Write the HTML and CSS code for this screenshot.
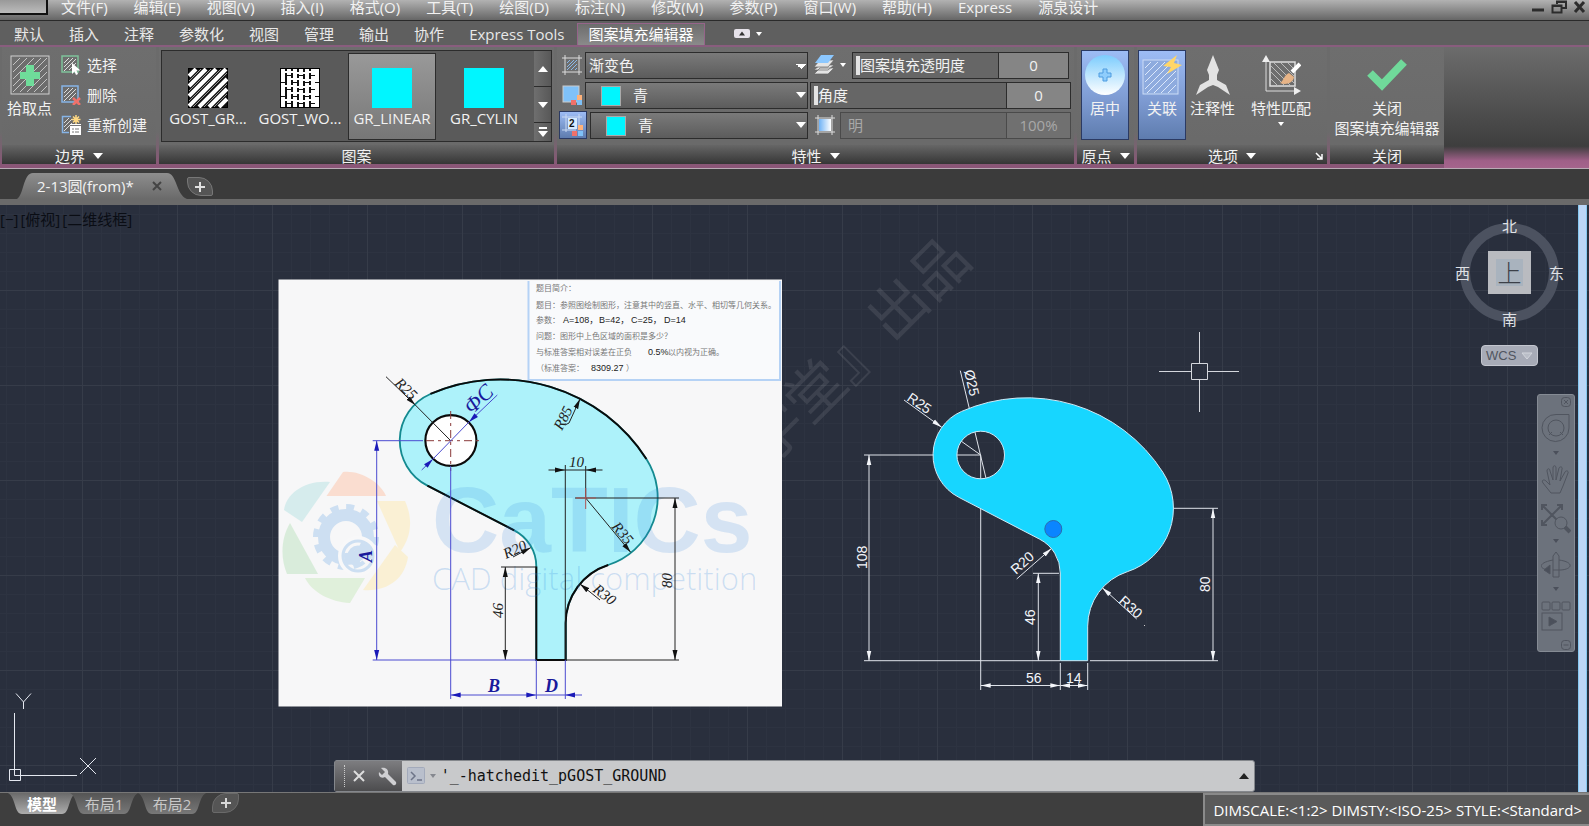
FILE: index.html
```html
<!DOCTYPE html>
<html lang="zh-CN">
<head>
  <meta charset="UTF-8">
  <meta name="viewport" content="width=device-width, initial-scale=1.0">
  <title>2-13圆(from)</title>
  <link rel="stylesheet" href="styles.css">
</head>
<body>

  <!-- 菜单栏 -->
  <header class="menubar">
    <div class="app-corner"></div>
    <nav class="menus">
      <a href="#">文件(F)</a>
      <a href="#">编辑(E)</a>
      <a href="#">视图(V)</a>
      <a href="#">插入(I)</a>
      <a href="#">格式(O)</a>
      <a href="#">工具(T)</a>
      <a href="#">绘图(D)</a>
      <a href="#">标注(N)</a>
      <a href="#">修改(M)</a>
      <a href="#">参数(P)</a>
      <a href="#">窗口(W)</a>
      <a href="#">帮助(H)</a>
      <a href="#">Express</a>
      <a href="#">源泉设计</a>
    </nav>
    <div class="window-buttons">
      <button type="button" aria-label="最小化"><svg width="14" height="14"><path d="M1 10h12" stroke="#2c2c2c" stroke-width="3"/></svg></button>
      <button type="button" aria-label="还原"><svg width="16" height="14"><path d="M6 4V1.500h9V8h-4M1.500 5.500h9v7h-9zM6 2h9M1.500 6h9" fill="none" stroke="#2c2c2c" stroke-width="2"/></svg></button>
      <button type="button" aria-label="关闭"><svg width="14" height="14"><path d="M2 2l9 10M11 2l-9 10" stroke="#2c2c2c" stroke-width="3"/></svg></button>
    </div>
  </header>

  <!-- 功能区选项卡 -->
  <nav class="ribbon-tabs">
    <a href="#">默认</a>
    <a href="#">插入</a>
    <a href="#">注释</a>
    <a href="#">参数化</a>
    <a href="#">视图</a>
    <a href="#">管理</a>
    <a href="#">输出</a>
    <a href="#">协作</a>
    <a href="#">Express Tools</a>
    <a href="#" class="active">图案填充编辑器</a>
    <button type="button" class="ribbon-toggle" aria-label="最小化功能区">
      <svg width="30" height="12"><rect x="1" y="1" width="16" height="9" rx="2" fill="#e6e2ea"/><path d="M6 7.500h6l-3-4z" fill="#333"/><path d="M23 4h6l-3 4z" fill="#fff"/></svg>
    </button>
  </nav>

  <!-- 功能区 -->
  <div class="ribbon">
    <section class="panel panel-border">
      <div class="panel-body">
        <button type="button" class="tool-big">
          <svg width="40" height="40" viewBox="0 0 40 40">
            <rect x="1" y="1" width="38" height="38" fill="none" stroke="#d0d0d0"/>
            <path d="M3 10l7-7M3 17L17 3M3 24L24 3M3 31L31 3M3 37L37 3M10 37l27-27M17 37l20-20M24 37l13-13M31 37l6-6" stroke="#c4c4c4"/>
            <path d="M16 10h8v7h6v7h-6v7h-8v-7h-6v-7h6z" fill="#6fdc9a"/>
          </svg>
          <span>拾取点</span>
        </button>
        <div class="tool-list">
          <button type="button">
            <svg width="20" height="20" viewBox="0 0 20 20"><rect x="1" y="1" width="16" height="16" fill="none" stroke="#7fc29b" stroke-width="1.500"/><path d="M3 8l5-5M3 12l9-9M3 16L15 4M8 15l7-7" stroke="#ddd"/><path d="M11 8v11l2.500-2.500L15 20l2-1-1.500-3.500h4z" fill="#fff"/></svg>
            选择
          </button>
          <button type="button">
            <svg width="20" height="20" viewBox="0 0 20 20"><rect x="1" y="1" width="16" height="16" fill="none" stroke="#86b4e6" stroke-width="1.500"/><path d="M3 8l5-5M3 12l9-9M3 16L15 4M8 15l7-7" stroke="#ddd"/><path d="M12 13l7 7M19 13l-7 7" stroke="#f0716a" stroke-width="2.500"/></svg>
            删除
          </button>
          <button type="button">
            <svg width="20" height="20" viewBox="0 0 20 20"><path d="M10 1.500H1.500v16H8" fill="none" stroke="#86b4e6" stroke-width="1.500"/><path d="M3 8l5-5M3 12l8-8M3 16l8-8" stroke="#ddd"/><path d="M15 0v9M10.500 4.500h9M12 1.500l6 6M18 1.500l-6 6" stroke="#ffd983" stroke-width="1.500"/><rect x="9" y="9" width="11" height="11" fill="#fff"/><path d="M9 10.500h11M11 14h2M14 14h4M11 17h2M14 17h4" stroke="#777"/></svg>
            重新创建
          </button>
        </div>
      </div>
      <h2 class="panel-title">边界 <i class="caret"></i></h2>
    </section>

    <section class="panel panel-pattern">
      <div class="panel-body">
        <div class="gallery">
          <button type="button" class="pattern">
            <svg width="40" height="40" viewBox="0 0 40 40"><rect x="0.500" y="0.500" width="39" height="39" fill="#111" stroke="#000"/><path d="M1 8l7-7M1 18L18 1M1 28L28 1M1 38L38 1M11 39l28-28M21 39l18-18M31 39l8-8" stroke="#fff" stroke-width="4"/><path d="M1 13L13 1M1 23L23 1M1 33L33 1M5 39L39 5M16 39l23-23M26 39l13-13" stroke="#999"/></svg>
            <span>GOST_GR...</span>
          </button>
          <button type="button" class="pattern">
            <svg width="40" height="40" viewBox="0 0 40 40"><rect x="0.500" y="0.500" width="39" height="39" fill="#111" stroke="#000"/><path d="M3 1v38M15 1v38M27 1v38M37 1v38" stroke="#fff" stroke-width="4" stroke-dasharray="13 1"/><path d="M9 1v38M21 1v38M33 1v38" stroke="#fff" stroke-width="4" stroke-dasharray="6 1 13 1 13 1"/><path d="M4 4h10M4 18h10M4 32h10M10 11h10M10 25h10M16 5h10M16 19h10M16 33h10M22 12h10M22 26h10M28 4h9M28 18h9M28 32h9" stroke="#fff" stroke-width="2"/></svg>
            <span>GOST_WO...</span>
          </button>
          <button type="button" class="pattern selected">
            <i class="swatch-large"></i>
            <span>GR_LINEAR</span>
          </button>
          <button type="button" class="pattern">
            <i class="swatch-large"></i>
            <span>GR_CYLIN</span>
          </button>
          <div class="gallery-scroll">
            <button type="button" aria-label="向上"><i class="caret up"></i></button>
            <button type="button" aria-label="向下"><i class="caret"></i></button>
            <button type="button" class="more" aria-label="展开"><i class="dash"></i><i class="caret"></i></button>
          </div>
        </div>
      </div>
      <h2 class="panel-title">图案</h2>
    </section>

    <section class="panel panel-props">
      <div class="panel-body">
        <div class="prop-row">
          <svg class="prop-icon" width="20" height="20" viewBox="0 0 20 20"><path d="M3 0v20M17 0v20M0 3h20M0 17h20" stroke="#ddd"/><path d="M5 8l3-3M5 12l7-7M5 15L15 5M9 15l6-6M13 15l2-2" stroke="#8ab9e8"/></svg>
          <select class="combo" aria-label="图案填充类型"><option>渐变色</option></select>
          <button type="button" class="layer-button" aria-label="图层"><svg width="32" height="20" viewBox="0 0 32 20"><path d="M6 13h14l-6 6H0zM6 10h14l-6 5H0z" fill="#e4e4e4" stroke="#666" stroke-width=".7"/><path d="M6 5h14l-6 7H0z" fill="#e4e4e4" stroke="#666" stroke-width=".7"/><path d="M7 0h13l-6 8H1z" fill="#8cc8ff"/><path d="M26 8h6l-3 4z" fill="#fff"/></svg></button>
          <div class="slider"><label for="opacity">图案填充透明度</label><input id="opacity" type="text" value="0"></div>
        </div>
        <div class="prop-row">
          <svg class="prop-icon" width="20" height="20" viewBox="0 0 20 20"><rect x="1" y="1" width="16" height="16" fill="#7fc1f8" stroke="#ccc"/><rect x="15" y="10" width="5" height="5" fill="#ffb27a"/><rect x="9" y="15" width="5" height="5" fill="#f0716a"/><rect x="15" y="15" width="5" height="5" fill="#7fc1f8"/></svg>
          <span class="color-combo"><i class="swatch"></i><select class="combo" aria-label="渐变色 1"><option>青</option></select></span>
          <div class="slider slider-wide"><label for="angle">角度</label><input id="angle" type="text" value="0"></div>
        </div>
        <div class="prop-row">
          <button type="button" class="pressed-icon" aria-label="渐变色 2"><svg width="22" height="22" viewBox="0 0 22 22"><path d="M4 0v18M17 0v14M0 3h20M0 16h14" stroke="#c9d9f2"/><rect x="6" y="4" width="9" height="11" fill="#d6ebff"/><text x="7" y="13" class="two">2</text><rect x="16" y="11" width="5" height="5" fill="#ffb27a"/><rect x="10" y="17" width="5" height="5" fill="#f0716a"/><rect x="16" y="17" width="5" height="5" fill="#7fc1f8"/></svg></button>
          <span class="color-combo"><i class="swatch"></i><select class="combo" aria-label="渐变色 2 颜色"><option>青</option></select></span>
          <svg class="tint-icon" width="20" height="20" viewBox="0 0 20 20"><defs><linearGradient id="tint"><stop stop-color="#6fb2f5"/><stop offset="1" stop-color="#fff"/></linearGradient></defs><path d="M3 0v20M17 0v20M0 3h20M0 17h20" stroke="#ddd"/><rect x="4" y="4" width="12" height="12" fill="url(#tint)"/></svg>
          <div class="slider slider-off"><label for="tintValue">明</label><input id="tintValue" type="text" value="100%" disabled></div>
        </div>
      </div>
      <h2 class="panel-title">特性 <i class="caret"></i></h2>
    </section>

    <section class="panel panel-origin">
      <div class="panel-body">
        <button type="button" class="tool-big pressed">
          <svg width="40" height="40" viewBox="0 0 40 40"><defs><linearGradient id="ball" x2="0" y2="1"><stop stop-color="#7cccfd"/><stop offset="1" stop-color="#fff"/></linearGradient></defs><circle cx="20" cy="20" r="20" fill="url(#ball)"/><path d="M18 14h4v4h4v4h-4v4h-4v-4h-4v-4h4z" fill="#8fcdfc" stroke="#4d9be0"/></svg>
          <span>居中</span>
        </button>
      </div>
      <h2 class="panel-title">原点 <i class="caret"></i></h2>
    </section>

    <section class="panel panel-options">
      <div class="panel-body">
        <button type="button" class="tool-big pressed">
          <svg width="40" height="40" viewBox="0 0 40 40"><rect x="1" y="5" width="35" height="34" fill="#8eabde" stroke="#cbdcf6"/><path d="M3 13l6-6M3 20L16 7M3 27L23 7M3 34L30 7M5 38l29-29M12 38l22-22M19 38l15-15M26 38l8-8" stroke="#dce8fb"/><path d="M35 0L21 11l8 1-4 7 15-9-8-2z" fill="#ffd668"/></svg>
          <span>关联</span>
        </button>
        <button type="button" class="tool-big tool-annotative">
          <svg width="40" height="40" viewBox="0 0 40 40"><path d="M20 0l6 15-2 5v5l9 5 4 10-12-8-5-2-5 2-12 8 4-10 9-5v-5l-2-5z" fill="#e2e2e2"/></svg>
          <span>注释性</span>
        </button>
        <button type="button" class="tool-big tool-match">
          <svg width="40" height="40" viewBox="0 0 40 40"><path d="M5 5v31h31" fill="none" stroke="#ddd"/><path d="M1 7l4-7 4 7zM33 32l7 4-7 4z" fill="#eee"/><rect x="9" y="7" width="25" height="24" fill="none" stroke="#ddd" stroke-width="1.500"/><path d="M10 24l7 7M10 17l14 14M10 11l19 19M13 8l20 20M20 8l13 13M27 8l6 6" stroke="#bbb"/><path d="M19 28c3-1 4-8 9-10l5 4c-1 7-9 8-14 6z" fill="#e7b487"/><path d="M31 17l8-8" stroke="#fff" stroke-width="4"/></svg>
          <span>特性匹配</span>
          <i class="caret small"></i>
        </button>
      </div>
      <h2 class="panel-title">选项 <i class="caret"></i>
        <svg class="launcher" width="8" height="8"><path d="M1 1l6 6M7 2v5H2" fill="none" stroke="#fff" stroke-width="1.500"/></svg>
      </h2>
    </section>

    <section class="panel panel-close">
      <div class="panel-body">
        <button type="button" class="tool-big">
          <svg width="40" height="40" viewBox="0 0 40 40"><path d="M3 18l12 12L37 7" fill="none" stroke="#70d99a" stroke-width="8"/></svg>
          <span>关闭<br>图案填充编辑器</span>
        </button>
      </div>
      <h2 class="panel-title">关闭</h2>
    </section>
    <div class="ribbon-rest"></div>
  </div>

  <!-- 文件选项卡 -->
  <div class="file-tabs">
    <div class="file-tab">
      <a href="#">2-13圆(from)*</a>
      <button type="button" aria-label="关闭图形"><svg width="12" height="12"><path d="M2 2l8 8M10 2l-8 8" stroke="#444" stroke-width="2"/></svg></button>
    </div>
    <button type="button" class="file-add" aria-label="新图形"><svg width="12" height="12"><path d="M6 1v10M1 6h10" stroke="#e0e0e0" stroke-width="2"/></svg></button>
  </div>

  <!-- 绘图区 -->
  <main class="canvas">
    <svg class="drawing" width="100%" height="100%">
      <defs>
        <marker id="arrow" viewBox="0 0 10 6" refX="10" refY="3" markerWidth="10" markerHeight="6" markerUnits="userSpaceOnUse" orient="auto-start-reverse"><path d="M0 .7l10 2.300-10 2.300z" fill="#f4f6fa"/></marker>
        <marker id="arrowBlack" viewBox="0 0 10 6" refX="10" refY="3" markerWidth="10" markerHeight="6" markerUnits="userSpaceOnUse" orient="auto-start-reverse"><path d="M0 .5l10 2.500-10 2.500z" fill="#111"/></marker>
        <marker id="arrowBlue" viewBox="0 0 10 6" refX="10" refY="3" markerWidth="10" markerHeight="6" markerUnits="userSpaceOnUse" orient="auto-start-reverse"><path d="M0 .5l10 2.500-10 2.500z" fill="#1a1ab8"/></marker>
      </defs>

      <g transform="translate(0 -205)">
        <!-- 题目图片 -->
        <rect x="278.500" y="279.500" width="503.500" height="427" fill="#f7f7f8"/>
        <path d="M528.500 281V380H780V281" fill="#f9fafc" stroke="#b5d2f5" stroke-width="2"/>
        <g class="brief">
          <text x="536" y="291">题目简介：</text>
          <text x="536" y="308">题目：参照图绘制图形，注意其中的竖直、水平、相切等几何关系。</text>
          <text x="536" y="323">参数：</text>
          <text x="536" y="339">问题：图形中上色区域的面积是多少？</text>
          <text x="536" y="355">与标准答案相对误差在正负</text>
          <text x="668" y="355">以内视为正确。</text>
          <text x="536" y="371">（标准答案：</text>
          <text x="626" y="371">）</text>
          <g class="brief-num">
            <text x="563" y="323">A=108，</text>
            <text x="599" y="323">B=42，</text>
            <text x="631" y="323">C=25，</text>
            <text x="664" y="323">D=14</text>
            <text x="648" y="355">0.5%</text>
            <text x="591" y="371">8309.27</text>
          </g>
        </g>

        <g transform="matrix(1.073 0 0 1.067 -601.4 -45)">
          <path d="M1060.300 660.700V573A38.100 38.100 0 0 0 1039.700 539.200L958.800 497.300A47.600 47.600 0 0 1 961.600 411.400A161.900 161.900 0 0 1 1162.900 472.300A66.700 66.700 0 0 1 1127.300 571.700A57.150 57.150 0 0 0 1087.700 626.100V660.700Z" fill="#adf2fa" stroke="#148a90" stroke-width="1.700"/>
          <path d="M961.600 411.400A161.900 161.900 0 0 1 1162.900 472.300M1127.300 571.700A57.150 57.150 0 0 0 1087.700 626.100V660.700H1060.300V573M1039.700 539.200L958.800 497.300" fill="none" stroke="#0b0b0b" stroke-width="1.800"/>
          <circle cx="980.700" cy="455" r="23.800" fill="#fff" stroke="#0b0b0b" stroke-width="2"/>
        </g>

        <!-- CaTICs 标志 -->
        <g opacity=".4">
          <path d="M284 510C286 494 304 480 330 482L302 522Z" fill="#a5dede"/>
          <path d="M326.500 496L343 472C360 470 380 482 386 496Z" fill="#ffb896"/>
          <path d="M377 501H405C412 516 413 535 400 552Z" fill="#ffe8a0"/>
          <path d="M395 545L408 557C405 578 388 592 363 590Z" fill="#ffe8a0"/>
          <path d="M305 578H365L350 603C330 602 312 592 305 578Z" fill="#bfe6b0"/>
          <path d="M290 523L318 574H287C281 560 280 540 290 523Z" fill="#aedeb0"/>
        </g>
        <g opacity=".22" fill="none" stroke="#3c8ede">
          <circle cx="346" cy="537" r="22" stroke-width="12"/>
          <circle cx="346" cy="537" r="30" stroke-width="6" stroke-dasharray="8 7.700"/>
          <circle cx="358" cy="556" r="17" stroke="#fff" stroke-width="6"/>
          <circle cx="358" cy="556" r="15" stroke-width="3"/>
          <path d="M364 550a8.500 8.500 0 1 0 0 12" stroke-width="4"/>
        </g>
        <text x="432" y="552" class="logo-text">CaTICs</text>
        <text x="432" y="590" class="logo-sub">CAD digital competition</text>

        <g class="sheet-black">
          <path d="M386 376.700L415.300 405" marker-end="url(#arrowBlack)"/>
          <path d="M415.300 405L450.700 440.700"/>
          <path d="M565 425L569 423L580 399" marker-end="url(#arrowBlack)"/>
          <path d="M548.500 470H565" marker-end="url(#arrowBlack)"/>
          <path d="M602.500 470H586" marker-end="url(#arrowBlack)"/>
          <path d="M565 470H586M565.300 465V660M585.700 466V498M575 498H679M565 660H679M501 567H536"/>
          <path d="M505.300 567V660" marker-start="url(#arrowBlack)" marker-end="url(#arrowBlack)"/>
          <path d="M675 498V660" marker-start="url(#arrowBlack)" marker-end="url(#arrowBlack)"/>
          <path d="M585.700 498L630.700 552.300" marker-end="url(#arrowBlack)"/>
          <path d="M513 557L530.700 547.700" marker-end="url(#arrowBlack)"/>
          <path d="M600 600L580 584" marker-end="url(#arrowBlack)"/>
        </g>
        <path d="M426 440.700H482M450.700 411V471" stroke="#8a3b3b" stroke-dasharray="8 4 3 4"/>
        <path d="M576 498H596M585.700 488V509" stroke="#b05050"/>
        <g class="sheet-blue">
          <path d="M372.700 440.700H423M372.700 660H536M450.700 466V699M536.300 660V699M565.300 660V699"/>
          <path d="M376.700 440.700V660" marker-start="url(#arrowBlue)" marker-end="url(#arrowBlue)"/>
          <path d="M450.700 695H536.300" marker-start="url(#arrowBlue)" marker-end="url(#arrowBlue)"/>
          <path d="M536.300 695H565M582 695H565.300" marker-end="url(#arrowBlue)"/>
          <path d="M497.300 395L469 422" marker-end="url(#arrowBlue)"/>
          <path d="M421.700 470L433 459" marker-end="url(#arrowBlue)"/>
          <path d="M433 459L469 422"/>
        </g>
        <g class="sheet-text">
          <text transform="translate(394 384) rotate(44)">R25</text>
          <text transform="translate(562 431) rotate(-63)">R85</text>
          <text x="569" y="467">10</text>
          <text transform="translate(611 527) rotate(50)">R35</text>
          <text transform="translate(506 559) rotate(-25)">R20</text>
          <text transform="translate(592 591) rotate(38)">R30</text>
          <text transform="translate(503 618) rotate(-90)">46</text>
          <text transform="translate(672 588) rotate(-90)">80</text>
        </g>
        <g class="sheet-letter">
          <text transform="translate(472 415) rotate(-43)" class="light">ΦC</text>
          <text transform="translate(372 562) rotate(-90)">A</text>
          <text x="488" y="692">B</text>
          <text x="545" y="692">D</text>
        </g>

        <text class="watermark" transform="translate(728 508) rotate(-45)">设学堂』出品</text>

        <!-- 模型图形 -->
        <g class="dims">
          <path d="M864 455H980.700M980.700 455V690M864 660.700H1060M1090 660.700H1218M1033 573.300H1059M1173 508.300H1218M1060.300 663V690M1087.700 663V690M960.300 370.700L986 478.300"/>
          <path d="M980.700 455L941.700 427.300"/>
          <path d="M904 400L941.700 427.300" marker-end="url(#arrow)"/>
          <path d="M869 455V660.700" marker-start="url(#arrow)" marker-end="url(#arrow)"/>
          <path d="M1038.300 573.300V660.700" marker-start="url(#arrow)" marker-end="url(#arrow)"/>
          <path d="M1213 508.300V660.700" marker-start="url(#arrow)" marker-end="url(#arrow)"/>
          <path d="M980.700 685.500H1060.300" marker-start="url(#arrow)" marker-end="url(#arrow)"/>
          <path d="M1060.300 685.500H1087.700" marker-start="url(#arrow)" marker-end="url(#arrow)"/>
          <path d="M1016.700 579L1051.700 548.300" marker-end="url(#arrow)"/>
          <path d="M1136.700 619L1102.300 587.700" marker-end="url(#arrow)"/>
        </g>
        <path d="M1060.300 660.700V573A38.100 38.100 0 0 0 1039.700 539.200L958.800 497.300A47.600 47.600 0 0 1 961.600 411.400A161.900 161.900 0 0 1 1162.900 472.300A66.700 66.700 0 0 1 1127.300 571.700A57.150 57.150 0 0 0 1087.700 626.100V660.700ZM956.900 455a23.800 23.800 0 1 0 47.600 0a23.800 23.800 0 1 0 -47.600 0" fill="#17d6ff" fill-rule="evenodd" stroke="#cfe9f5"/>
        <g class="dim-text">
          <text transform="translate(906 400) rotate(34)">R25</text>
          <text transform="translate(964 371) rotate(77)">Ø25</text>
          <text transform="translate(1016 575) rotate(-42)">R20</text>
          <text transform="translate(1118 602) rotate(42)">R30</text>
          <text transform="translate(867 569) rotate(-90)">108</text>
          <text transform="translate(1035 625) rotate(-90)">46</text>
          <text transform="translate(1210 592) rotate(-90)">80</text>
          <text x="1026" y="683">56</text>
          <text x="1066" y="683">14</text>
        </g>
        <circle cx="1053.300" cy="529" r="8.500" fill="#0a85ff" stroke="#2a6cb0"/>
        <rect x="1144" y="625" width="1" height="1" fill="#ccc"/>

        <!-- 十字光标 -->
        <path d="M1159 371.500H1191.500M1207.500 371.500H1239M1199.500 332V363.500M1199.500 379.500V412M1191.500 363.500h16v16h-16z" fill="none" stroke="#d4d7dd"/>

        <!-- UCS 图标 -->
        <path d="M14.500 713V775.500H77M9.500 769.500h11v11h-11zM16 693.500L23.500 702L31 693.500M23.500 702V709M80 758L96 774M96 758L80 774" fill="none" stroke="#e4e8f0"/>
      </g>
    </svg>

    <div class="view-controls">
      <button type="button">[−]</button><button type="button">[俯视]</button><button type="button">[二维线框]</button>
    </div>

    <div class="viewcube">
      <button type="button">北</button>
      <div class="viewcube-row">
        <button type="button">西</button>
        <button type="button" class="face"><span>上</span></button>
        <button type="button">东</button>
      </div>
      <button type="button">南</button>
    </div>
    <button type="button" class="wcs">WCS <svg width="12" height="8"><path d="M1 1h10l-5 6z" fill="#b9bdc7" stroke="#d2d5dc"/></svg></button>

    <div class="navbar">
      <button type="button" class="nav-end" aria-label="关闭导航栏"><svg width="10" height="10"><rect x=".5" y=".5" width="9" height="9" rx="3"/><path d="M3 3l4 4M7 3L3 7"/></svg></button>
      <button type="button" class="nav-wheel" aria-label="控制盘"><svg width="30" height="30"><path d="M15 1.500H28V15A13.500 13.500 0 1 1 15 1.500z"/><circle cx="15" cy="15" r="8"/><path d="M8 22l3-3M22 22l-3-3"/></svg></button>
      <button type="button" class="nav-caret" aria-label="控制盘选项"><i class="caret dim"></i></button>
      <button type="button" class="nav-hand" aria-label="平移"><svg width="30" height="30"><path d="M10 28L2 18c-2-3 1-4 3-2l4 4L6 6c0-3 3-3 3 0l3 9V3c0-3 3-3 3 0v12l3-12c1-2 4-1 3 1l-2 12 5-9c1-2 4-1 3 1l-5 13-3 7z"/></svg></button>
      <button type="button" class="nav-zoom" aria-label="缩放"><svg width="30" height="30"><path d="M2 2l18 18M20 2L2 20M1 6V1h5M16 1h5v5M1 16v5h5" stroke-width="2"/><circle cx="20" cy="19" r="6" fill="#6c727c"/><path d="M24 23l5 5" stroke-width="4"/></svg></button>
      <button type="button" class="nav-caret" aria-label="缩放选项"><i class="caret dim"></i></button>
      <button type="button" class="nav-orbit" aria-label="动态观察"><svg width="30" height="30"><path d="M12 27V6l3-4 3 4v21zM12 10c-16 3-14 9-4 10M18 10c15 2 14 9 2 10h-8"/><path d="M9 15v9l-6-4z" fill="#4b505b"/></svg></button>
      <button type="button" class="nav-caret" aria-label="动态观察选项"><i class="caret dim"></i></button>
      <button type="button" class="nav-motion" aria-label="ShowMotion"><svg width="30" height="30"><rect x="1" y="1" width="8" height="8" rx="1"/><rect x="11" y="1" width="8" height="8" rx="1"/><rect x="21" y="1" width="8" height="8" rx="1"/><rect x="1" y="12" width="20" height="17"/><path d="M8 16v9l8-4.500z" fill="#4b505b"/></svg></button>
      <button type="button" class="nav-end" aria-label="自定义导航栏"><svg width="10" height="10"><rect x=".5" y=".5" width="9" height="9" rx="3"/><path d="M2.500 5h5"/></svg></button>
    </div>

    <div class="edge-strip"></div>

    <form class="command">
      <div class="command-tools">
        <i class="grip"></i>
        <button type="button" aria-label="关闭命令行"><svg width="14" height="14"><path d="M2 2l10 10M12 2L2 12" stroke="#ddd" stroke-width="2"/></svg></button>
        <button type="button" aria-label="自定义"><svg width="20" height="20" viewBox="0 0 20 20"><path d="M3 2l4 4-3 3-3-3c-1 4 2 7 6 5l8 8c2 1 4-1 3-3l-8-8c1-4-2-7-7-6z" fill="#cfcfd2"/></svg></button>
      </div>
      <svg class="prompt" width="30" height="18"><rect x=".5" y=".5" width="17" height="16" rx="1" fill="#b9bfcc" stroke="#a3aabb"/><path d="M4 5l4 4-4 4M10 13h5" fill="none" stroke="#6d7488" stroke-width="1.500"/><path d="M23 7h6l-3 4z" fill="#85888f"/></svg>
      <input type="text" aria-label="命令行" value="'_-hatchedit_pGOST_GROUND">
      <button type="button" aria-label="命令历史"><svg width="10" height="6"><path d="M0 6h10L5 0z" fill="#222"/></svg></button>
    </form>
  </main>

  <!-- 布局选项卡与状态栏 -->
  <footer class="bottom">
    <nav class="layout-tabs">
      <a href="#" class="current">模型</a>
      <a href="#">布局1</a>
      <a href="#">布局2</a>
      <button type="button" aria-label="新建布局"><svg width="12" height="12"><path d="M6 1v10M1 6h10" stroke="#d8d8d8" stroke-width="2"/></svg></button>
    </nav>
    <div class="status">DIMSCALE:&lt;1:2&gt; DIMSTY:&lt;ISO-25&gt; STYLE:&lt;Standard&gt;</div>
  </footer>

</body>
</html>
```
FILE: styles.css
```css
* {
  box-sizing: border-box;
}

body {
  margin: 0;
  height: 100vh;
  display: flex;
  flex-direction: column;
  overflow: hidden;
  background: #3d3d3d;
  color: #f2f2f2;
  font-family: "Open Sans", "Noto Sans CJK SC", sans-serif;
  font-size: 15px;
  line-height: 20px;
}

a {
  color: inherit;
  text-decoration: none;
}

button {
  margin: 0;
  padding: 0;
  border: 0;
  background: none;
  color: inherit;
  font: inherit;
}

svg {
  display: block;
  flex: none;
}

/* 菜单栏 */
.menubar {
  display: flex;
  height: 21px;
  flex: none;
  background: linear-gradient(#b2b2b2, #8c8c8c 50%, #666);
  border-bottom: 1px solid #2a2a2a;
}

.app-corner {
  width: 48px;
  height: 15px;
  background: linear-gradient(#999, #bbb);
  border: solid #111;
  border-width: 0 2px 2px 0;
}

.menus {
  display: flex;
  gap: 26px;
  margin-left: 13px;
  height: 16px;
  line-height: 14px;
  white-space: nowrap;
}

.window-buttons {
  display: flex;
  gap: 6px;
  margin-left: auto;
  padding-right: 2px;
  height: 14px;
}

/* 功能区选项卡 */
.ribbon-tabs {
  display: flex;
  gap: 1px;
  flex: none;
  height: 24px;
  padding: 2px 2px 0;
  background: #5f5f5f;
  color: #e8e8e8;
  white-space: nowrap;
}

.ribbon-tabs a {
  padding: 0 12px;
  line-height: 22px;
}

.ribbon-tabs .active {
  padding: 0 10px;
  border: 1px solid #96648a;
  border-bottom: 0;
  background: linear-gradient(#6d6d6d, #8a8a8a);
  line-height: 20px;
  color: #fff;
}

.ribbon-toggle {
  margin-left: 27px;
}

/* 功能区 */
.ribbon {
  display: flex;
  gap: 3px;
  flex: none;
  height: 124px;
  padding-left: 2px;
  border-top: 2px solid #895d7e;
  border-bottom: 1px solid #b9abb5;
  background: linear-gradient(#6b6b6b 70%, #8c5578);
}

.panel {
  display: flex;
  flex-direction: column;
  flex: none;
  height: 117px;
  background: linear-gradient(#6e6e6e, #696969);
}

.panel-border { width: 154px; }
.panel-pattern { width: 395px; }
.panel-props { width: 517px; }
.panel-origin { width: 57px; }
.panel-options { width: 190px; }
.panel-close { width: 114px; }

.panel-body {
  display: flex;
  height: 98px;
  padding-top: 3px;
}

.panel-title {
  display: flex;
  position: relative;
  align-items: center;
  justify-content: center;
  gap: 8px;
  margin: 0;
  padding-top: 2px;
  height: 19px;
  background: linear-gradient(#666, #363636);
  font-size: 15px;
  font-weight: normal;
  white-space: nowrap;
}

.ribbon-rest {
  flex: 1;
  margin-left: -3px;
  background: linear-gradient(#6c6c6c, #3e3e3e 82%, #9f6088 94%, #a5648c);
}

.caret {
  width: 0;
  height: 0;
  border: solid transparent;
  border-width: 6px 5px 0;
  border-top-color: #fff;
}

.caret.up {
  border-width: 0 5px 6px;
  border-bottom-color: #fff;
}

.caret.small {
  margin-top: 4px;
  border-width: 4px 3px 0;
}

.caret.dim {
  border-width: 4px 3px 0;
  border-top-color: #4b505b;
}

.launcher {
  position: absolute;
  right: 4px;
  bottom: 4px;
}

.tool-big {
  display: flex;
  flex-direction: column;
  align-items: center;
  height: 90px;
  padding-top: 5px;
  white-space: nowrap;
}

.tool-big span {
  margin-top: 3px;
}

.tool-big.pressed {
  border: 1px solid #2b3a63;
  background: linear-gradient(#9dbcf5, #7b98cf 60%, #5e7cae);
  width: 48px;
  padding-top: 4px;
}

.panel-border .tool-big {
  margin-left: 5px;
}

.panel-origin .tool-big {
  margin-left: 4px;
}

.panel-options .panel-body {
  gap: 4px;
  padding-left: 1px;
}

.tool-match {
  margin-left: 12px;
}

.panel-close .tool-big {
  width: 100%;
}

.tool-list {
  display: flex;
  flex-direction: column;
  margin-left: 9px;
}

.tool-list button {
  display: flex;
  align-items: center;
  gap: 6px;
  height: 30px;
  white-space: nowrap;
}

.gallery {
  display: flex;
  flex: 1;
  margin: 0 2px;
  height: 92px;
  border: 1px solid #2c2c2c;
  background: #5a5a5a;
}

.pattern {
  display: flex;
  flex-direction: column;
  align-items: center;
  width: 92px;
  margin-top: 2px;
  height: 87px;
  padding-top: 14px;
  border: 1px solid transparent;
}

.pattern.selected {
  border-color: #2c2c2c;
  background: linear-gradient(#999, #777);
  width: 88px;
  margin: 2px 2px 0;
}

.swatch-large {
  width: 40px;
  height: 40px;
  background: #00f6ff;
}

.gallery-scroll {
  display: flex;
  flex-direction: column;
  gap: 1px;
  margin-left: auto;
  width: 17px;
  background: #2c2c2c;
}

.gallery-scroll button {
  display: flex;
  flex-direction: column;
  align-items: center;
  justify-content: center;
  flex: 2;
  background: linear-gradient(90deg, #6f6f6f, #585858);
}

.gallery-scroll .more {
  flex: 1;
  gap: 2px;
}

.dash {
  width: 8px;
  height: 2px;
  background: #fff;
}

/* 特性面板 */
.panel-props .panel-body {
  flex-direction: column;
  gap: 4px;
  padding: 5px 3px 0 2px;
}

.prop-row {
  display: flex;
  align-items: center;
  height: 26px;
}

.prop-icon {
  margin: 0 3px;
}

.pressed-icon {
  display: flex;
  align-items: center;
  justify-content: center;
  width: 28px;
  height: 28px;
  border: 1px solid #2b3a63;
  background: linear-gradient(#9dbcf5, #5e7cae);
}

.pressed-icon + .color-combo {
  margin-left: 3px;
  width: 218px;
}

.two {
  fill: #111;
  font: bold 10px "Liberation Sans", sans-serif;
}

.combo {
  appearance: none;
  width: 223px;
  height: 27px;
  padding: 0 3px;
  border: 1px solid #2c2c2c;
  border-radius: 0;
  background: linear-gradient(#7a7a7a, #5c5c5c);
  color: #f2f2f2;
  font: inherit;
}

.prop-row > .combo,
.color-combo {
  position: relative;
  display: flex;
  width: 223px;
  flex: none;
}

.prop-row > .combo {
  background: linear-gradient(45deg, transparent 50%, #fff 50%) 210px 11px / 5px 5px no-repeat,
    linear-gradient(-45deg, transparent 50%, #fff 50%) 215px 11px / 5px 5px no-repeat,
    linear-gradient(#7a7a7a, #5c5c5c);
}

.color-combo .combo {
  width: 100%;
  padding-left: 47px;
}

.color-combo::after {
  content: "";
  position: absolute;
  right: 2px;
  top: 10px;
  border: solid transparent;
  border-width: 6px 5px 0;
  border-top-color: #fff;
}

.swatch {
  position: absolute;
  left: 16px;
  top: 4px;
  width: 20px;
  height: 20px;
  border: 1px solid #aaa;
  background: #00f6ff;
}

.layer-button {
  margin: 0 6px;
}

.slider {
  display: flex;
  flex: 1;
  height: 27px;
  border: 1px solid #2c2c2c;
  background: #666;
}

.prop-row:first-child .slider {
  margin-right: 2px;
}

.slider label {
  flex: 1;
  margin: 3px 0 3px 3px;
  border-left: 4px solid #e4e4e4;
  line-height: 18px;
}

.slider input {
  width: 70px;
  border: 0;
  border-left: 1px solid #2c2c2c;
  background: #858585;
  color: #f2f2f2;
  font: inherit;
  text-align: center;
}

.slider-wide {
  margin-left: 2px;
}

.slider-wide input,
.slider-off input {
  width: 64px;
}

.slider-off {
  border-color: #4a4a4a;
  background: #686868;
  color: #a8a8a8;
}

.slider-off label {
  border-left-color: transparent;
}

.slider-off input {
  border-color: #4a4a4a;
  background: #707070;
  color: #a8a8a8;
}

.tint-icon {
  margin: 0 5px 0 7px;
}

/* 文件选项卡 */
.file-tabs {
  display: flex;
  align-items: flex-end;
  flex: none;
  height: 36px;
  padding-left: 17px;
  border-bottom: 6px solid #6a6a6a;
  background: #3b3b3b;
}

.file-tab {
  display: flex;
  align-items: center;
  width: 170px;
  height: 26px;
  padding: 0 24px 0 20px;
  justify-content: space-between;
  background: linear-gradient(#8e8e8e, #6a6a6a);
  clip-path: path("M0 26C7 22 6 0 16 0H150C160 0 159 22 170 26Z");
  white-space: nowrap;
}

.file-add {
  display: flex;
  align-items: center;
  justify-content: center;
  width: 26px;
  height: 19px;
  margin-bottom: 3px;
  border: 1px solid #777;
  border-radius: 2px 14px 2px 14px;
  background: #555;
}

/* 绘图区 */
.canvas {
  position: relative;
  flex: 1;
  min-height: 0;
  overflow: hidden;
  background-color: #292f3d;
  background-image:
    linear-gradient(90deg, #363c49 1px, transparent 1px),
    linear-gradient(#363c49 1px, transparent 1px),
    linear-gradient(90deg, #2d3341 1px, transparent 1px),
    linear-gradient(#2d3341 1px, transparent 1px);
  background-size: 95px 95px, 95px 95px, 19px 19px, 19px 19px;
  background-position: 82px 0, 0 85px, 6px 0, 0 9px;
}

.drawing {
  position: absolute;
  inset: 0;
}

.brief {
  fill: #777;
  font: 8px "Noto Sans CJK SC", sans-serif;
}

.brief-num {
  fill: #222;
  font: 9px "Liberation Sans", "Noto Sans CJK SC", sans-serif;
}

.logo-text {
  fill: #2d83dc;
  fill-opacity: .17;
  font: bold 93px "Liberation Sans", sans-serif;
}

.logo-sub {
  fill: #2d83dc;
  fill-opacity: .22;
  font: 300 31px "Open Sans", sans-serif;
}

.sheet-black path {
  fill: none;
  stroke: #222;
}

.sheet-blue path {
  fill: none;
  stroke: #4a4ad0;
}

.sheet-text {
  fill: #222;
  font: italic 15px "Liberation Serif", serif;
}

.sheet-letter {
  fill: #1a1a9c;
  font: italic bold 18px "Liberation Serif", serif;
}

.sheet-letter .light {
  font-size: 22px;
  font-weight: normal;
}

.watermark {
  fill: #fff;
  fill-opacity: .09;
  font: 58px "Noto Sans CJK SC", sans-serif;
}

.dims path {
  fill: none;
  stroke: #dfe3ea;
}

.dim-text {
  fill: #f4f6fa;
  font: 14px "Liberation Sans", sans-serif;
}

.view-controls {
  position: absolute;
  left: 0;
  top: 4px;
  display: flex;
  gap: 2px;
  color: #0a0d14;
}

.viewcube {
  position: absolute;
  right: 30px;
  top: 18px;
  width: 99px;
  height: 99px;
  display: flex;
  flex-direction: column;
  align-items: center;
  justify-content: space-between;
  border: 10px solid #4c5260;
  border-radius: 50%;
  color: #e0e2e6;
}

.viewcube > button {
  margin: -17px 0;
}

.viewcube-row {
  display: flex;
  align-items: center;
  gap: 18px;
}

.face {
  width: 43px;
  height: 43px;
  padding: 8px;
  background: #b9bbc0;
  color: #3c4048;
  font-size: 24px;
}

.face span {
  display: block;
  background: #a9b3be;
  font-weight: 300;
  line-height: 27px;
}

.wcs {
  position: absolute;
  right: 51px;
  top: 140px;
  display: flex;
  align-items: center;
  justify-content: space-between;
  width: 57px;
  height: 21px;
  padding: 0 4px;
  border: 1px solid #c3c6cf;
  border-radius: 4px;
  background: #a7abb7;
  color: #50555f;
  font: 13px "Liberation Sans", sans-serif;
}

.navbar {
  position: absolute;
  right: 14px;
  top: 189px;
  display: flex;
  flex-direction: column;
  width: 38px;
  border: 1px solid #858b94;
  border-radius: 3px;
  background: #6c727c;
}

.navbar button {
  display: flex;
  align-items: center;
  justify-content: center;
}

.navbar svg {
  fill: none;
  stroke: #50555f;
}

.navbar .nav-end {
  height: 13px;
  justify-content: flex-end;
  padding-right: 3px;
}

.nav-wheel { height: 40px; }
.nav-caret { height: 10px; }
.nav-hand { height: 44px; }
.nav-zoom { height: 34px; }
.nav-orbit { height: 38px; }
.nav-motion { height: 44px; }

.edge-strip {
  position: absolute;
  top: 0;
  right: 2px;
  bottom: 0;
  width: 9px;
  border: solid #86c8f0;
  border-width: 0 1px;
  background: #bcd6f6;
}

/* 命令行 */
.command {
  position: absolute;
  left: 21%;
  right: 21%;
  bottom: 0;
  height: 32px;
  display: flex;
  align-items: center;
  border: 1px solid #84878c;
  border-radius: 3px;
  background: #c8c9cb;
  padding-right: 5px;
}

.command-tools {
  display: flex;
  align-items: center;
  gap: 12px;
  width: 67px;
  height: 100%;
  padding-left: 9px;
  background: linear-gradient(#7d7d80, #4c4c4e);
}

.command-tools button + button {
  margin-right: 4px;
}

.grip {
  height: 22px;
  margin-right: -5px;
  border-left: 1px dotted #ccc;
}

.prompt {
  margin: 0 4px 0 5px;
}

.command input {
  flex: 1;
  min-width: 0;
  padding: 0;
  border: 0;
  background: none;
  color: #111;
  font: 15px "DejaVu Sans Mono", monospace;
}

/* 底部 */
.bottom {
  display: flex;
  justify-content: space-between;
  flex: none;
  height: 34px;
  border-top: 1px solid #777;
  background: #3e3e3e;
}

.layout-tabs {
  display: flex;
  padding-left: 8px;
  color: #c8c8c8;
  height: 22px;
}

.layout-tabs a {
  width: 68px;
  text-align: center;
  line-height: 22px;
  background: linear-gradient(#555, #7a7a7a);
  clip-path: path("M0 0H68C60 4 62 21 54 21H14C6 21 8 4 0 0Z");
}

.layout-tabs .current {
  margin-right: -6px;
  background: linear-gradient(#6a6a6a, #b0b0b0);
  color: #fff;
  font-weight: bold;
}

.layout-tabs button {
  display: flex;
  align-items: center;
  justify-content: center;
  width: 27px;
  height: 20px;
  margin-left: 6px;
  border: 1px solid #6a6a6a;
  border-radius: 14px 2px 14px 2px;
  background: #555;
}

.status {
  padding: 0 7px 0 8px;
  border: 2px solid #8a8a8a;
  border-right: 0;
  background: #5a5a5a;
  color: #fff;
  font-weight: 500;
  line-height: 31px;
  white-space: nowrap;
}
```
